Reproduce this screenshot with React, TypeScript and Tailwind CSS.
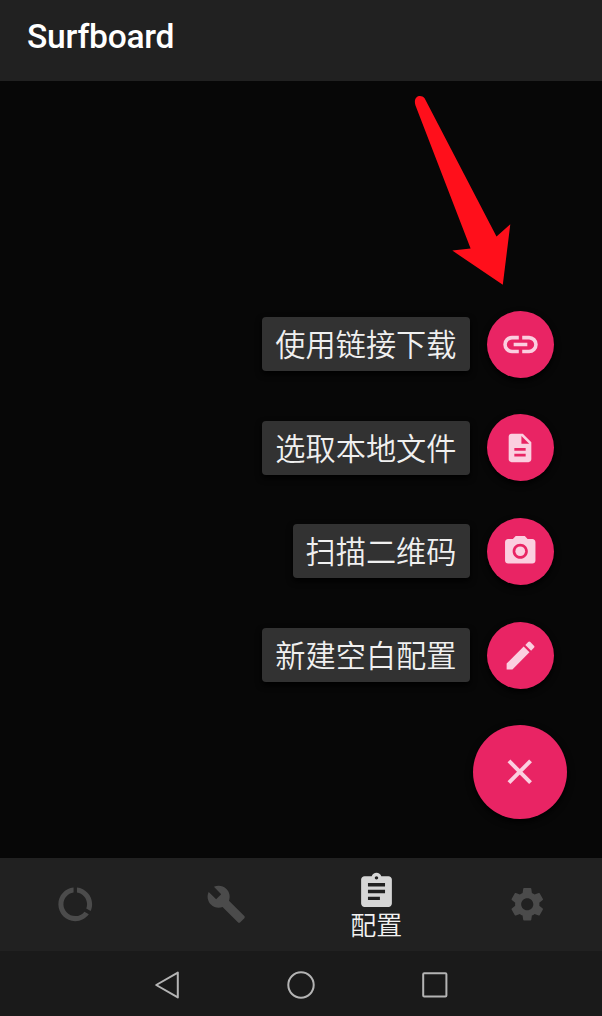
import type { ReactNode } from "react";
import {
  MdAssignment,
  MdBuild,
  MdDataUsage,
  MdDescription,
  MdEdit,
  MdPhotoCamera,
  MdSettings,
} from "react-icons/md";

function LinkIcon() {
  return (
    <svg width="41" height="41" viewBox="0 0 24 24" fill="none" stroke="currentColor" strokeWidth="2.1">
      <path d="M11 7.95H7a4.05 4.05 0 0 0 0 8.1h4M13 7.95h4a4.05 4.05 0 0 1 0 8.1h-4M8 12h8" />
    </svg>
  );
}

function CloseIcon() {
  return (
    <svg width="41.5" height="41.5" viewBox="0 0 24 24" fill="none" stroke="currentColor" strokeWidth="2.3">
      <path d="M5.75 5.75 18.25 18.25M18.25 5.75 5.75 18.25" />
    </svg>
  );
}

const actions: { label: string; icon: ReactNode }[] = [
  { label: "使用链接下载", icon: <LinkIcon /> },
  { label: "选取本地文件", icon: <MdDescription size={34} /> },
  { label: "扫描二维码", icon: <MdPhotoCamera size={36.5} /> },
  { label: "新建空白配置", icon: <MdEdit size={37} /> },
];

function SpeedDial() {
  return (
    <div className="flex flex-col items-end pr-[35px]">
      <ul className="flex flex-col gap-[36.7px] pr-[13.5px]">
        {actions.map((action) => (
          <li key={action.label} className="flex h-[67px] items-center justify-end gap-[17px]">
            <span className="flex h-[54px] items-center rounded-[4px] bg-[#323232] px-[13px] pt-[4px] text-[30.2px] font-[350] leading-none whitespace-nowrap text-[#f0f0f0] shadow-[0_3px_6px_#000]">
              {action.label}
            </span>
            <button className="flex size-[67px] items-center justify-center rounded-full bg-[#e92464] text-[#fbcfe0] shadow-[0_3px_6px_#000]">
              {action.icon}
            </button>
          </li>
        ))}
      </ul>
      <button className="mt-[36.4px] flex size-[94px] items-center justify-center rounded-full bg-[#e92464] text-[#fbcfe0] shadow-[0_3px_7px_#000]">
        <CloseIcon />
      </button>
    </div>
  );
}

function Tab({ children }: { children: ReactNode }) {
  return (
    <button className="flex flex-1 flex-col items-center justify-center text-[#4b4b4b]">{children}</button>
  );
}

export default function App() {
  return (
    <div className="relative flex h-[1016px] w-[602px] flex-col overflow-hidden bg-[#070707] font-['Roboto','Noto_Sans_CJK_SC',sans-serif]">
      <header className="flex h-[81px] shrink-0 items-start bg-[#212121] pt-[17px] pl-[27px]">
        <h1 className="text-[33.6px] leading-[40px] font-medium tracking-[-0.25px] text-white">Surfboard</h1>
      </header>

      <main className="flex-1 pt-[229.5px]">
        <SpeedDial />
      </main>

      <nav className="flex h-[93.5px] shrink-0 bg-[#212121]">
        <Tab>
          <MdDataUsage size={40.5} />
        </Tab>
        <Tab>
          <MdBuild size={40.5} />
        </Tab>
        <button className="flex flex-1 flex-col items-center pt-[13px] text-[#d6d6d6]">
          <MdAssignment size={41} />
          <span className="text-[26px] leading-[28px] font-[350] text-[#f2f2f2]">配置</span>
        </button>
        <Tab>
          <MdSettings size={40.5} />
        </Tab>
      </nav>

      <footer className="flex h-[65px] shrink-0 items-start justify-center gap-[106px] bg-[#1a1a1a] pt-[19.5px]">
        <svg width="28" height="28" viewBox="0 0 28 28" fill="none" stroke="#b4b4b4" strokeWidth="2" strokeLinejoin="round">
          <path d="M3.2 14 24.8 1.6v24.8Z" />
        </svg>
        <svg width="28" height="28" viewBox="0 0 28 28" fill="none" stroke="#b4b4b4" strokeWidth="2">
          <circle cx="14" cy="14" r="12.7" />
        </svg>
        <svg width="28" height="28" viewBox="0 0 28 28" fill="none" stroke="#b4b4b4" strokeWidth="2">
          <rect x="2.2" y="2.2" width="23.2" height="23.2" rx="1" />
        </svg>
      </footer>

      <svg
        className="pointer-events-none absolute top-[90px] left-[405px]"
        width="115"
        height="200"
        viewBox="405 90 115 200"
        fill="#ff0f1b"
      >
        <path d="M424.6 98.3 496.5 236.6 510.3 224.3 502.8 284.8 452.3 250.6 470.6 248.6 415.5 105.5C412.5 96 421 93.5 424.6 98.3Z" />
      </svg>
    </div>
  );
}
